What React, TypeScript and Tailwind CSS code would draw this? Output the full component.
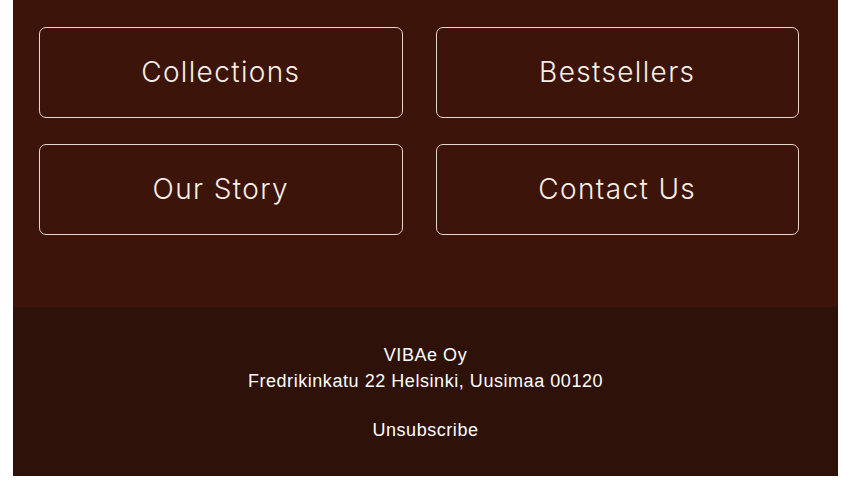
import React from "react";

const links = ["Collections", "Bestsellers", "Our Story", "Contact Us"];

const App: React.FC = () => {
  return (
    <div className="w-[851px] h-[489px] bg-white">
      <div className="ml-[13px] w-[825px]">
        <div className="bg-[#3d1409] pl-[26px] pr-[39px] pt-[27px] pb-[72px]">
          <div className="grid grid-cols-2 gap-x-[33px] gap-y-[26px]">
            {links.map((label) => (
              <a
                key={label}
                href="#"
                className="h-[91px] flex items-center justify-center pb-[2px] rounded-[7px] border border-[#e6d6d0] text-[#f7efe6] text-[28px] font-[Inter,sans-serif] font-light tracking-[1.35px]"
              >
                {label}
              </a>
            ))}
          </div>
        </div>
        <div className="bg-[#2e1109] h-[169px] pt-[35px] text-center text-white text-[18px] leading-[26px] tracking-[0.55px] font-['Liberation_Sans',Arial,sans-serif]">
          <p>VIBAe Oy</p>
          <p>Fredrikinkatu 22 Helsinki, Uusimaa 00120</p>
          <p className="mt-[23px]">Unsubscribe</p>
        </div>
      </div>
    </div>
  );
};

export default App;
